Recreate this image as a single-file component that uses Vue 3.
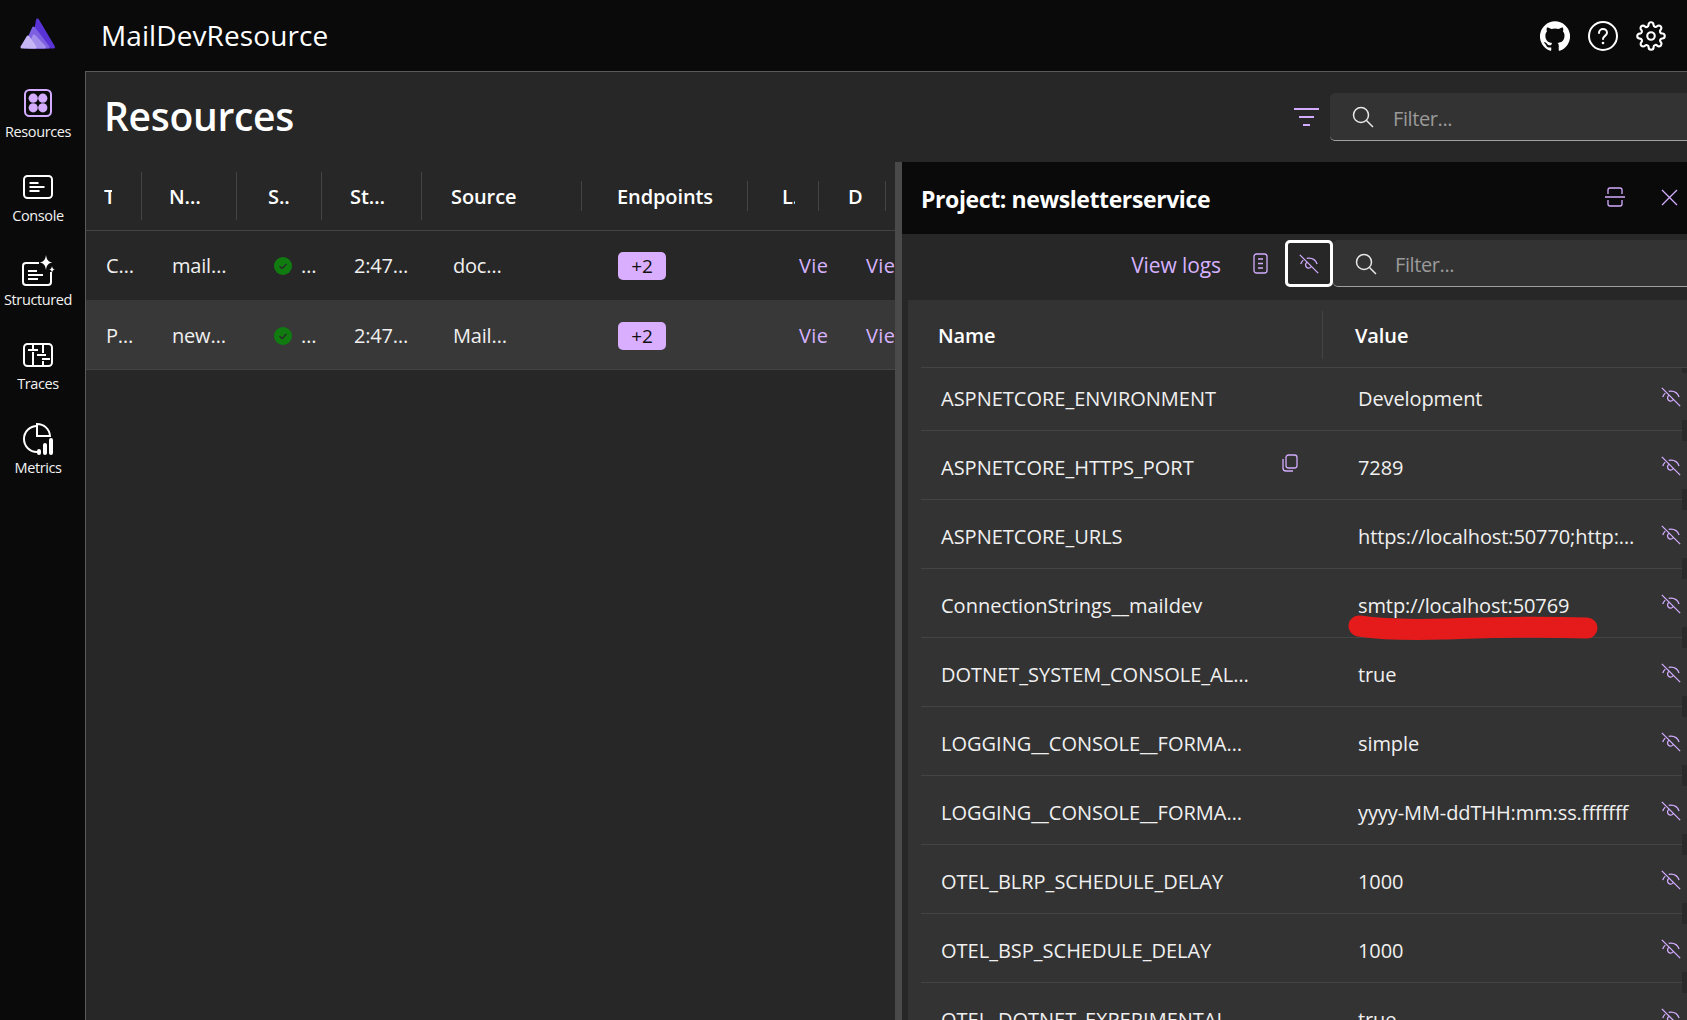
<script setup>
const nav = [
  { label: 'Resources', key: 'res' },
  { label: 'Console', key: 'con' },
  { label: 'Structured', key: 'str' },
  { label: 'Traces', key: 'tra' },
  { label: 'Metrics', key: 'met' },
]
const cols = [
  { t: 'T', pad: 18, w: 8 }, { t: 'N…', pad: 27 }, { t: 'S..', pad: 31 }, { t: 'St…', pad: 28 },
  { t: 'Source', pad: 29 }, { t: 'Endpoints', pad: 35 }, { t: 'L.', pad: 34, w: 13 }, { t: 'D', pad: 29 },
]
const resources = [
  { type: 'C…', name: 'mail…', src: 'doc…' },
  { type: 'P…', name: 'new…', src: 'Mail…', selected: true },
]
const envVars = [
  ['ASPNETCORE_ENVIRONMENT', 'Development'],
  ['ASPNETCORE_HTTPS_PORT', '7289'],
  ['ASPNETCORE_URLS', 'https://localhost:50770;http:…'],
  ['ConnectionStrings__maildev', 'smtp://localhost:50769'],
  ['DOTNET_SYSTEM_CONSOLE_AL…', 'true'],
  ['LOGGING__CONSOLE__FORMA…', 'simple'],
  ['LOGGING__CONSOLE__FORMA…', 'yyyy-MM-ddTHH:mm:ss.fffffff'],
  ['OTEL_BLRP_SCHEDULE_DELAY', '1000'],
  ['OTEL_BSP_SCHEDULE_DELAY', '1000'],
  ['OTEL_DOTNET_EXPERIMENTAL', 'true'],
]
</script>

<template>
  <div class="app">
    <header class="top">
      <svg class="logo" viewBox="0 0 37 33" stroke-width="3" stroke-linejoin="round">
        <path d="M18.5 3 L34.500 30 H14 Z" fill="#5a33d6" stroke="#5a33d6"/>
        <path d="M14.500 11 L29 30 H6 Z" fill="#7d60e2" stroke="#7d60e2"/>
        <path d="M15 19 L25.500 30 H10 Z" fill="#a48fec" stroke="#a48fec"/>
        <path d="M9 20 L16 30 H3 Z" fill="#c6b6f5" stroke="#c6b6f5"/>
      </svg>
      <div class="app-title">MailDevResource</div>
      <div class="top-icons">
        <svg class="ic-top" viewBox="0 0 24 24" fill="#fff"><path d="M12 .3a12 12 0 0 0-3.8 23.4c.6.1.8-.3.8-.6v-2c-3.3.7-4-1.6-4-1.6-.6-1.4-1.4-1.8-1.4-1.8-1-.7.1-.7.1-.7 1.2 0 1.9 1.2 1.9 1.2 1 1.8 2.8 1.3 3.5 1 0-.8.4-1.3.7-1.6-2.7-.3-5.5-1.3-5.5-6 0-1.2.5-2.3 1.3-3.1-.2-.4-.6-1.6 0-3.2 0 0 1-.3 3.4 1.2a11.5 11.5 0 0 1 6 0c2.3-1.5 3.3-1.2 3.3-1.2.6 1.6.2 2.8 0 3.2.9.8 1.3 1.9 1.3 3.2 0 4.6-2.8 5.6-5.5 5.9.5.4.9 1 .9 2.2v3.3c0 .3.1.7.8.6A12 12 0 0 0 12 .3"/></svg>
        <svg class="ic-top" viewBox="0 0 30 30" fill="none" stroke="#fff" stroke-width="2">
          <circle cx="15" cy="15" r="14"/>
          <path d="M11 12c0-2.400 1.800-4 4-4s4 1.600 4 3.800c0 3-4 3.200-4 6.200" stroke-linecap="round"/>
          <circle cx="15" cy="22" r="1.300" fill="#fff" stroke="none"/>
        </svg>
        <svg class="ic-top" viewBox="0 0 24 24" fill="none" stroke="#fff" stroke-width="1.700">
          <circle cx="12" cy="12" r="3"/>
          <path d="M19.4 15a1.65 1.65 0 0 0 .33 1.82l.06.06a2 2 0 0 1 0 2.83 2 2 0 0 1-2.83 0l-.06-.06a1.65 1.65 0 0 0-1.82-.33 1.65 1.65 0 0 0-1 1.51V21a2 2 0 0 1-2 2 2 2 0 0 1-2-2v-.09A1.65 1.65 0 0 0 9 19.4a1.65 1.65 0 0 0-1.82.33l-.06.06a2 2 0 0 1-2.83 0 2 2 0 0 1 0-2.83l.06-.06a1.65 1.65 0 0 0 .33-1.82 1.65 1.65 0 0 0-1.51-1H3a2 2 0 0 1-2-2 2 2 0 0 1 2-2h.09A1.65 1.65 0 0 0 4.6 9a1.65 1.65 0 0 0-.33-1.82l-.06-.06a2 2 0 0 1 0-2.83 2 2 0 0 1 2.83 0l.06.06a1.65 1.65 0 0 0 1.82.33H9a1.65 1.65 0 0 0 1-1.51V3a2 2 0 0 1 2-2 2 2 0 0 1 2 2v.09a1.65 1.65 0 0 0 1 1.51 1.65 1.65 0 0 0 1.82-.33l.06-.06a2 2 0 0 1 2.83 0 2 2 0 0 1 0 2.83l-.06.06a1.65 1.65 0 0 0-.33 1.82V9a1.65 1.65 0 0 0 1.51 1H21a2 2 0 0 1 2 2 2 2 0 0 1-2 2h-.09a1.65 1.65 0 0 0-1.51 1z"/>
        </svg>
      </div>
    </header>

    <div class="shell">
      <nav class="side">
        <div v-for="n in nav" :key="n.key" class="nav-item">
          <div class="nav-ic">
            <svg v-if="n.key === 'res'" width="28" height="28" viewBox="0 0 28 28">
              <rect x="1" y="1" width="26" height="26" rx="4.500" fill="none" stroke="#d3acff" stroke-width="2"/>
              <circle cx="9.200" cy="9.200" r="4.600" fill="#d3acff"/>
              <circle cx="18.800" cy="9.200" r="4.600" fill="#d3acff"/>
              <circle cx="9.200" cy="18.800" r="4.600" fill="#d3acff"/>
              <circle cx="18.800" cy="18.800" r="4.600" fill="#d3acff"/>
            </svg>
            <svg v-else-if="n.key === 'con'" width="30" height="24" viewBox="0 0 30 24" fill="none" stroke="#fff" stroke-width="2">
              <rect x="1" y="1" width="28" height="22" rx="3.500"/>
              <path d="M6.500 8h9M6.500 12h15M6.500 16h10"/>
            </svg>
            <svg v-else-if="n.key === 'str'" width="34" height="32" viewBox="0 0 34 32" fill="none" stroke="#fff" stroke-width="2">
              <path d="M18 8H5a3 3 0 0 0-3 3v16a3 3 0 0 0 3 3h22a3 3 0 0 0 3-3V17"/>
              <path d="M7 16h9M7 20h15M7 24h10"/>
              <path d="M25 0c.8 5 2.300 6.800 6.500 7.500C27.300 8.200 25.800 10 25 15c-.8-5-2.300-6.800-6.500-7.500C22.700 6.800 24.200 5 25 0z" fill="#fff" stroke="none"/>
              <path d="M31 11c.4 2.500 1.100 3.200 3 3.500-1.900.3-2.600 1-3 3.500-.4-2.500-1.100-3.200-3-3.500 1.900-.3 2.600-1 3-3.500z" fill="#fff" stroke="none"/>
            </svg>
            <svg v-else-if="n.key === 'tra'" width="30" height="24" viewBox="0 0 30 24" fill="none" stroke="#fff" stroke-width="2">
              <rect x="1" y="1" width="28" height="22" rx="3.500"/>
              <path d="M5 7h10M14 12h9M19 16h8M10 1v5M10 9v14M20 1v9M20 18v5" />
            </svg>
            <svg v-else width="32" height="33" viewBox="0 0 32 33" fill="none" stroke="#fff" stroke-width="2">
              <path d="M15 3A13 13 0 0 0 15 29"/>
              <path d="M15 1c7 0 12.500 5 13 12H15z"/>
              <rect x="15" y="26" width="4" height="6" rx="2" fill="#fff" stroke="none"/>
              <rect x="21" y="20" width="4" height="12" rx="2" fill="#fff" stroke="none"/>
              <rect x="27" y="15" width="4" height="17" rx="2" fill="#fff" stroke="none"/>
            </svg>
          </div>
          <div class="nav-label">{{ n.label }}</div>
        </div>
      </nav>

      <main class="main">
        <div class="toolbar">
          <h1>Resources</h1>
          <svg class="ic-filter" viewBox="0 0 25 18" fill="none" stroke="#d3acff" stroke-width="2">
            <path d="M0 1h25M5 9h15M9 17h7"/>
          </svg>
          <div class="filter filter-top">
            <svg class="ic-search" viewBox="0 0 22 22" fill="none" stroke="#e8e8e8" stroke-width="1.500">
              <circle cx="9" cy="9" r="7.500"/><path d="M14.500 14.500 21 21"/>
            </svg>
            <input placeholder="Filter..." />
          </div>
        </div>

        <div class="body">
          <section class="grid-pane">
            <div class="res-row res-head">
              <div v-for="(c, i) in cols" :key="i" class="hcell" :class="{ tall: i < 4 }" :style="{ paddingLeft: c.pad + 'px' }">
                <span class="hlabel" :style="c.w ? { width: c.w + 'px' } : null">{{ c.t }}</span>
              </div>
            </div>
            <div v-for="r in resources" :key="r.name" class="res-row res-body" :class="{ selected: r.selected }">
              <div class="cell c-type">{{ r.type }}</div>
              <div class="cell c-name">{{ r.name }}</div>
              <div class="cell c-state">
                <svg width="18" height="18" viewBox="0 0 18 18">
                  <circle cx="9" cy="9" r="9" fill="#107c10"/>
                  <path d="M5.500 9.200 8 11.500l4.500-4.500" fill="none" stroke="#2b2b2b" stroke-width="1.500"/>
                </svg>
                <span>…</span>
              </div>
              <div class="cell c-start">2:47…</div>
              <div class="cell c-src">{{ r.src }}</div>
              <div class="cell c-end"><span class="badge">+2</span></div>
              <div class="cell c-log link">Vie</div>
              <div class="cell c-det link">Vie</div>
            </div>
          </section>

          <div class="splitter"></div>

          <aside class="panel">
            <div class="panel-head">
              <div class="panel-title">Project: newsletterservice</div>
              <svg class="ic-split" viewBox="0 0 20 20" fill="none" stroke="#d3acff" stroke-width="1.300">
                <path d="M0 10h20M3 7V3a2 2 0 0 1 2-2h10a2 2 0 0 1 2 2v4M3 13v4a2 2 0 0 0 2 2h10a2 2 0 0 0 2-2v-4"/>
              </svg>
              <svg class="ic-close" viewBox="0 0 17 17" fill="none" stroke="#d3acff" stroke-width="1.300">
                <path d="M1 1l15 15M16 1 1 16"/>
              </svg>
            </div>

            <div class="panel-bar">
              <span class="link view-logs">View logs</span>
              <svg class="ic-doc" viewBox="0 0 15 21" fill="none" stroke="#d3acff" stroke-width="1.300">
                <rect x="1" y="1" width="13" height="19" rx="2.500"/>
                <path d="M5 6h5M5 10.500h5M5 15h5"/>
              </svg>
              <button class="hide-btn">
                <svg class="ic-eye" viewBox="0 0 24 24" fill="none" stroke="#d3acff" stroke-width="1.400">
                  <path d="M2 2l20 20M9.500 5.800c.8-.2 1.700-.3 2.500-.3 4.200 0 7.500 2.800 8.800 6.500M3 12c.5-1.600 1.400-3 2.700-4.200M9.600 10.300a3.400 3.400 0 1 0 4.800 4.700"/>
                </svg>
              </button>
              <div class="filter filter-small">
                <svg class="ic-search" viewBox="0 0 22 22" fill="none" stroke="#e8e8e8" stroke-width="1.500">
                  <circle cx="9" cy="9" r="7.500"/><path d="M14.500 14.500 21 21"/>
                </svg>
                <input placeholder="Filter..." />
              </div>
            </div>

            <div class="env">
              <div class="env-head">
                <div class="env-name">Name</div>
                <div class="env-sep"></div>
                <div class="env-val">Value</div>
              </div>
              <div v-for="(v, i) in envVars" :key="i" class="env-row" :class="{ first: i === 0 }">
                <div class="env-name">
                  <span>{{ v[0] }}</span>
                  <svg v-if="i === 1" class="ic-copy" viewBox="0 0 16 18" fill="none" stroke="#d3acff" stroke-width="1.300">
                    <rect x="4" y="1" width="11" height="13" rx="2.500"/>
                    <path d="M1 5v9a3 3 0 0 0 3 3h7"/>
                  </svg>
                </div>
                <div class="env-val">{{ v[1] }}</div>
                <svg class="ic-eye row-eye" viewBox="0 0 24 24" fill="none" stroke="#d3acff" stroke-width="1.400">
                  <path d="M2 2l20 20M9.500 5.800c.8-.2 1.700-.3 2.500-.3 4.200 0 7.500 2.800 8.800 6.500M3 12c.5-1.600 1.400-3 2.700-4.200M9.600 10.300a3.400 3.400 0 1 0 4.800 4.700"/>
                </svg>
                <svg v-if="i === 3" class="scribble" viewBox="0 0 248 24" fill="none">
                  <path d="M10 11C30 14 60 15 95 14S170 11 238 13" stroke="#e51b1b" stroke-width="21" stroke-linecap="round"/>
                </svg>
              </div>
            </div>
          </aside>
        </div>
      </main>
    </div>
  </div>
</template>

<style scoped>
.app{ width:1687px; height:1020px; overflow:hidden; display:flex; flex-direction:column; background:#0a0a0a; color:#fff; font-family:"Open Sans","Noto Sans",sans-serif; }
.top{ height:71px; flex:none; display:flex; align-items:center; padding:0 21px 0 19px; box-sizing:border-box; }
.logo{ width:37px; height:33px; margin-top:-4px; }
.app-title{ margin-left:45px; font-size:28px; letter-spacing:.1px; color:#fff; position:relative; top:-1px; }
.top-icons{ margin-left:auto; display:flex; gap:18px; align-items:center; }
.ic-top{ width:30px; height:30px; display:block; }

.shell{ flex:1; display:flex; min-height:0; }
.side{ width:85px; flex:none; padding-top:14px; box-sizing:border-box; }
.nav-item{ height:84px; display:flex; flex-direction:column; align-items:center; padding-right:9px; box-sizing:border-box; }
.nav-ic{ height:36px; display:flex; align-items:center; justify-content:center; margin-bottom:1px; }
.nav-ic svg{ display:block; }
.nav-label{ font-size:14.500px; line-height:20px; letter-spacing:-.4px; color:#f2f2f2; white-space:nowrap; }

.main{ flex:1; min-width:0; background:#272727; border-top:1px solid #5a5a5a; border-left:1px solid #5a5a5a; display:flex; flex-direction:column; }
.toolbar{ height:90px; flex:none; display:flex; align-items:center; padding-left:18px; box-sizing:border-box; }
.toolbar h1{ margin:0 auto 0 0; font-size:39px; font-weight:600; letter-spacing:-.3px; color:#fff; line-height:1; position:relative; top:-2px; }
.ic-filter{ width:25px; height:18px; margin-right:11px; flex:none; }
.filter{ width:357px; height:48px; flex:none; display:flex; align-items:center; background:#333; border-bottom:1px solid #a0a0a0; border-radius:5px 0 0 5px; box-sizing:border-box; padding-left:22px; }
.filter-top{ padding-top:3px; }
.filter .ic-search{ width:22px; height:22px; flex:none; }
.filter-top .ic-search{ margin-top:-3px; }
.filter input{ flex:1; min-width:0; margin-left:19px; border:0; outline:0; background:transparent; font:inherit; font-size:20px; letter-spacing:-.4px; color:#eee; padding:0; }
.filter input::placeholder{ color:#9a9a9a; opacity:1; }

.body{ flex:1; display:flex; min-height:0; }
.grid-pane{ width:809px; flex:none; overflow:hidden; }
.res-row{ display:grid; grid-template-columns:56px 95px 85px 100px 160px 166px 71px 67px; font-size:20px; letter-spacing:-.2px; }
.res-head{ height:68px; width:809px; border-bottom:1px solid #444; font-weight:600; letter-spacing:-.1px; }
.hcell{ display:flex; align-items:center; position:relative; white-space:nowrap; overflow:hidden; }
.hlabel{ display:block; overflow:hidden; flex:none; }
.hcell::after{ content:""; position:absolute; right:0; top:19px; height:30px; width:1px; background:#444; }
.hcell.tall::after{ top:10px; height:48px; }
.res-body{ height:69px; align-items:center; color:#f0f0f0; width:809px; }
.res-body.selected{ background:#383838; height:70px; border-bottom:1px solid #444; box-sizing:border-box; padding-top:2px; }
.cell{ white-space:nowrap; overflow:hidden; }
.c-type{ padding-left:20px; }
.c-name{ padding-left:30px; }
.c-state{ padding-left:37px; display:flex; align-items:center; gap:9px; }
.c-start{ padding-left:32px; }
.c-src{ padding-left:31px; }
.c-end{ padding-left:36px; display:flex; align-items:center; }
.badge{ width:48px; height:28px; background:#d9aeff; color:#111; border-radius:5px; display:flex; align-items:center; justify-content:center; font-size:19px; }
.c-log{ padding-left:51px; overflow:visible; letter-spacing:.4px; }
.c-det{ padding-left:47px; overflow:visible; letter-spacing:.4px; }
.link{ color:#d6b2ff; }

.splitter{ width:7px; flex:none; background:#4a4a4a; }
.panel{ flex:1; min-width:0; display:flex; flex-direction:column; }
.panel-head{ height:72px; flex:none; background:#0a0a0a; display:flex; align-items:center; padding-left:19px; box-sizing:border-box; }
.panel-title{ font-size:23px; font-weight:700; letter-spacing:-.4px; margin-right:auto; margin-top:2px; }
.ic-split{ width:20px; height:20px; margin-right:36px; margin-top:-2px; }
.ic-close{ width:17px; height:17px; margin-right:9px; margin-top:-2px; }
.panel-bar{ height:66px; flex:none; display:flex; align-items:flex-start; justify-content:flex-end; padding-top:6px; box-sizing:border-box; }
.view-logs{ font-size:21px; letter-spacing:-.1px; line-height:47px; padding-top:2px; }
.ic-doc{ width:15px; height:21px; margin:13px 17px 0 32px; }
.hide-btn{ width:48px; height:47px; background:transparent; border:3px solid #fff; border-radius:5px; padding:0; display:flex; align-items:center; justify-content:center; box-sizing:border-box; }
.ic-eye{ width:22px; height:22px; display:block; }
.filter-small{ width:354px; height:47px; padding-left:22px; padding-top:2px; }
.filter-small input{ margin-left:18px; }

.env{ margin-left:6px; flex:1; background:#333; }
.env-head{ height:68px; margin-left:13px; padding-left:17px; padding-top:3px; border-bottom:1px solid #444; display:flex; align-items:center; box-sizing:border-box; font-size:20px; font-weight:600; letter-spacing:-.1px; position:relative; }
.env-head .env-name{ width:384px; flex:none; display:block; padding:0; }
.env-sep{ width:1px; height:48px; background:#444; flex:none; margin-right:32px; }
.env-head .env-val{ padding:0; }
.env-head::after{ content:""; position:absolute; right:0; bottom:-6px; width:5px; height:5px; background:#2a2a2a; }
.env-row{ height:69px; margin-left:13px; padding-left:20px; border-bottom:1px solid #444; display:flex; align-items:center; box-sizing:border-box; font-size:20px; color:#f0f0f0; position:relative; padding-top:5px; white-space:nowrap; }
.env-row.first{ height:63px; padding-top:0; padding-bottom:2px; }
.env-row::after{ content:""; position:absolute; right:0; bottom:-11px; width:5px; height:21px; background:#2a2a2a; }
.env-name{ width:417px; flex:none; display:flex; align-items:center; justify-content:space-between; padding-right:60px; box-sizing:border-box; }
.ic-copy{ width:16px; height:18px; margin-top:-10px; }
.env-val{ flex:1; min-width:0; letter-spacing:-.1px; }
.row-eye{ position:absolute; right:5px; top:calc(50% - 10px); }
.env-row.first .row-eye{ top:calc(50% - 13px); }
.scribble{ position:absolute; left:428px; top:46px; width:248px; height:24px; z-index:2; overflow:visible; }
</style>

<style>
html,body{ margin:0; background:#0a0a0a; overflow:hidden; }
</style>
